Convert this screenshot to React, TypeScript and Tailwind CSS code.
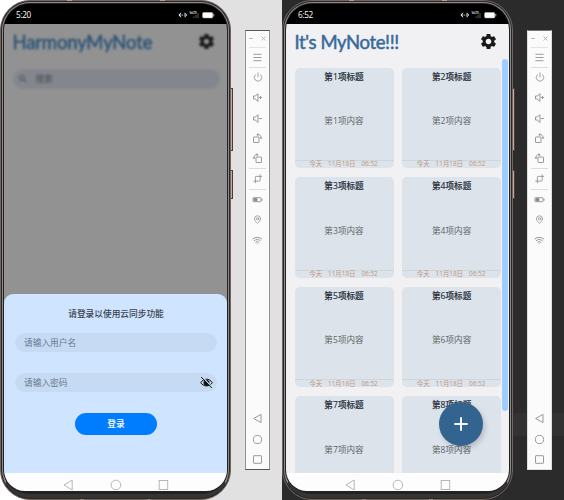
import React from "react";
import { MdSettings, MdSearch } from "react-icons/md";
import { Menu, Power, Crop, MapPin, Wifi } from "lucide-react";

function Title({ children, color }: { children: React.ReactNode; color: string }) {
  return (
    <h1 className={`pt-px font-['Lato',sans-serif] text-[18.5px] font-normal leading-none [-webkit-text-stroke:0.5px_currentColor] ${color}`}>{children}</h1>
  );
}

function StatusBar({ time }: { time: string }) {
  return (
    <div className="flex h-[20px] shrink-0 items-center bg-black pt-[2px] pr-[12px] pl-[12px] text-white">
      <span className="pt-px font-['Open_Sans',sans-serif] text-[8.2px] font-medium leading-none tracking-[-0.3px]">{time}</span>
      <svg className="ml-auto" width="37" height="10" viewBox="0 0 37 10" fill="none">
        <path d="M3 2.8.9 5 3 7.2M6.5 2.8 8.6 5 6.5 7.2M2 5h1.4M6.1 5h1.4" stroke="#fff" strokeWidth="1" />
        <circle cx="4.7" cy="5" r=".6" fill="#fff" />
        <text x="11.4" y="4" fill="#ddd" fontSize="2.6" fontWeight="700" fontFamily="Roboto">VoLTE</text>
        <path d="M15.5 8h1V6.6h-1zM17.5 8h1V5h-1zM19.5 8h1V3h-1z" fill="#5a5a5a" />
        <rect x="24.6" y="2.5" width="10.2" height="5.4" rx="1.2" fill="#fff" stroke="#bbb" strokeWidth=".6" />
        <path d="M35.8 4v2.4" stroke="#ddd" strokeWidth=".8" />
      </svg>
    </div>
  );
}

function NavBar() {
  return (
    <div className="h-[18.5px] shrink-0 bg-[#fdfdfd]">
      <svg className="block" width="224" height="18" viewBox="0 0 224 18" fill="none" stroke="#b0b0b0" strokeWidth=".9">
        <path d="M68.2 7v10L60 12z" />
        <circle cx="111.9" cy="12" r="4.8" />
        <rect x="155.2" y="7.5" width="8.5" height="9" />
      </svg>
    </div>
  );
}

function Phone({ time, children }: { time: string; children: React.ReactNode }) {
  return (
    <div className="relative h-[500px] w-[231px] shrink-0">
      <div className="absolute top-[88px] right-[-2px] h-[63px] w-[3px] border border-[#493d38] bg-[#c3aba0]" />
      <div className="absolute top-[170px] right-[-2px] h-[29px] w-[3px] border border-[#493d38] bg-[#c3aba0]" />
      <div className="relative h-[500px] rounded-[30px] border border-[#75655e] bg-[#282828] p-px">
        <div className="h-full rounded-[28px] border border-b-[4px] border-[#8b8b8b] border-b-[#353535] bg-[#222] px-px pt-px pb-[3px]">
          <div className="flex h-full flex-col overflow-hidden rounded-t-[26px] rounded-b-[21px] bg-black">
            <StatusBar time={time} />
            {children}
            <NavBar />
          </div>
        </div>
      </div>
      <div className="absolute top-0 left-[67px] h-px w-[5px] bg-[#c4a092]" />
      <div className="absolute top-0 left-[160px] h-px w-[5px] bg-[#c4a092]" />
      <div className="absolute bottom-0 left-[80px] h-px w-[4px] bg-[#a58a7d]" />
      <div className="absolute bottom-0 left-[147px] h-px w-[4px] bg-[#a58a7d]" />
    </div>
  );
}

function Cell({ children, line = false }: { children: React.ReactNode; line?: boolean }) {
  return (
    <div className={`flex h-[20.3px] w-[17px] shrink-0 items-center justify-center border-b ${line ? "border-[#dcdcdc]" : "border-transparent"}`}>
      {children}
    </div>
  );
}

function Glyph({ children }: { children: React.ReactNode }) {
  return (
    <svg width="11" height="11" viewBox="0 0 11 11" fill="none" stroke="#888" strokeWidth=".85">
      {children}
    </svg>
  );
}

function Toolbar({ dark = false }: { dark?: boolean }) {
  return (
    <div className={`mt-[30px] flex h-[440px] w-[25px] shrink-0 flex-col items-center border bg-[#fbfbfb] text-[#888] ${dark ? "border-[#dedede] border-t-[#777]" : "border-[#929292] border-t-[#555] border-b-[#555]"}`}>
      <div className="flex h-[16.5px] w-[17px] shrink-0 items-center border-b border-[#e3e3e3]">
        <svg width="17" height="9" viewBox="0 0 17 9" fill="none" stroke="#aaa" strokeWidth=".8">
          <path d="M0 4.5h4M12.5 2.5l4 4M16.5 2.5l-4 4" />
        </svg>
      </div>
      <Cell line><Menu size={11} strokeWidth={1.8} /></Cell>
      <Cell><Power size={10} strokeWidth={1.8} /></Cell>
      <Cell><Glyph><path d="M1.5 4h1.7L6 1.8v7.6L3.2 7H1.5zM7 5.5h3M8.5 4v3" /></Glyph></Cell>
      <Cell><Glyph><path d="M1.5 4h1.7L6 1.8v7.6L3.2 7H1.5zM7 5.5h3" /></Glyph></Cell>
      <Cell><Glyph><rect x="1.5" y="4" width="5.5" height="5.5" rx=".5" /><path d="M5 1.7c2.5-.7 4.3.8 4 4M4.8 1.7l1.6-1M4.8 1.7l1.6 1.1M7.8 5h2.4" /></Glyph></Cell>
      <Cell line><Glyph><rect x="4" y="4" width="5.5" height="5.5" rx=".5" /><path d="M6 1.7C3.5 1 1.7 2.5 2 5.7M6.2 1.7 4.6.7M6.2 1.7 4.6 2.8M.8 5h2.4" /></Glyph></Cell>
      <Cell line><Crop size={9.5} strokeWidth={2} className="-scale-x-100" /></Cell>
      <Cell><Glyph><rect x="1" y="3.7" width="8" height="4" rx=".5" /><path d="M2 4.6h3v2.2H2z" fill="#888" /><path d="M10 4.7v2" /></Glyph></Cell>
      <Cell><MapPin size={9} strokeWidth={2} /></Cell>
      <Cell><Wifi size={10.5} strokeWidth={2} /></Cell>
      <div className="mt-auto -mb-px flex flex-col items-center">
        <Cell><Glyph><path d="M9 1.4v8.2L1.7 5.5z" /></Glyph></Cell>
        <Cell><Glyph><circle cx="5.5" cy="5.5" r="4.1" /></Glyph></Cell>
        <Cell><Glyph><rect x="1.5" y="1.7" width="8" height="7.6" rx=".5" /></Glyph></Cell>
      </div>
    </div>
  );
}

function Field({ label, children }: { label: string; children?: React.ReactNode }) {
  return (
    <div className="flex h-[18.5px] items-center justify-between rounded-full bg-[#c6dbf3] pr-[4.5px] pl-[9px] text-[8.7px] text-[#66798f]">
      <span>{label}</span>
      {children}
    </div>
  );
}

function LoginScreen() {
  return (
    <div className="flex min-h-0 flex-1 flex-col bg-[#929292] font-['Noto_Sans_CJK_SC',sans-serif]">
      <div className="h-[269.5px] shrink-0 px-[8.5px] blur-[0.8px]">
        <div className="flex h-[35px] items-center justify-between pr-[3px]">
          <Title color="text-[#2b5378] tracking-[-0.15px]">HarmonyMyNote</Title>
          <MdSettings size={19} color="#171717" />
        </div>
        <div className="mt-[10px] flex h-[19.5px] w-[207px] items-center rounded-full bg-[#83878d] pl-[5px] text-[8.7px] text-[#45494e]">
          <MdSearch size={10} />
          <span className="ml-[8px]">搜索</span>
        </div>
      </div>
      <div className="flex flex-1 flex-col rounded-t-[9px] bg-[#cfe4ff] pt-[13px] pr-[10px] pl-[11px]">
        <h2 className="mb-[13.5px] text-center text-[8.7px] font-medium leading-[13px] text-[#394350]">请登录以使用云同步功能</h2>
        <Field label="请输入用户名" />
        <div className="h-[21.5px]" />
        <Field label="请输入密码">
          <svg width="13" height="13" viewBox="0 0 13 13" fill="none" stroke="#111" strokeWidth="1">
            <path d="M.7 6.7C3.7 2 9.3 2 12.3 6.7 9.3 11 3.7 11 .7 6.7z" />
            <circle cx="6.5" cy="6.8" r="2.6" fill="#111" />
            <path d="M2.3.8 12.6 11.6" stroke="#c6dbf3" strokeWidth="1.2" />
            <path d="M1.1 1 11.8 12" />
          </svg>
        </Field>
        <button className="mt-[21.5px] flex h-[22px] w-[82px] items-center justify-center self-center rounded-full bg-[#007dff] text-[8.7px] font-medium text-white">登录</button>
      </div>
    </div>
  );
}

function Card({ n, cut = false }: { n: number; cut?: boolean }) {
  return (
    <div className={`flex flex-col bg-[#dce3eb] text-center text-[8.6px] ${cut ? "h-[78px] rounded-t-[5px]" : "h-[100.6px] rounded-[5px]"}`}>
      <div className="h-[19px] shrink-0 font-medium leading-[19.5px] text-[#29313e] [-webkit-text-stroke:0.15px_#29313e]">第{n}项标题</div>
      <div className="flex h-[70.4px] shrink-0 items-center justify-center text-[#626768]">第{n}项内容</div>
      {!cut && (
        <div className="mt-auto flex h-[8px] shrink-0 items-center justify-center gap-[6px] border-t border-[#cfd6d9] pr-px text-[6.4px] leading-none text-[#c0987f]">
          <span>今天</span>
          <span>11月18日</span>
          <span>06:52</span>
        </div>
      )}
    </div>
  );
}

function NotesScreen() {
  return (
    <div className="relative flex min-h-0 flex-1 flex-col overflow-hidden bg-[#f1f1f3] px-[8.5px]">
      <div className="flex h-[35px] shrink-0 items-center justify-between pr-[3px]">
        <Title color="text-[#386a9b] tracking-[-0.38px]">It's MyNote!!!</Title>
        <MdSettings size={19} color="#191919" />
      </div>
      <div className="mt-[8.5px] grid w-[206.6px] shrink-0 grid-cols-2 gap-x-[8.5px] gap-y-[9px]">
        {[1, 2, 3, 4, 5, 6, 7, 8].map((n) => <Card key={n} n={n} cut={n > 6} />)}
      </div>
      <div className="absolute top-[35px] right-[1px] h-[352px] w-[6px] rounded-full bg-[#9fcdff]" />
      <button className="absolute top-[378px] left-[152.5px] flex size-[44px] items-center justify-center rounded-full bg-[#33638f] shadow-[2px_3px_5px_#0000002b]">
        <svg width="14" height="14" viewBox="0 0 14 14" stroke="#f3f6fa" strokeWidth="2">
          <path d="M7 .3v13.4M.3 7h13.4" />
        </svg>
      </button>
    </div>
  );
}

export default function App() {
  return (
    <main className="flex h-[500px] w-[564px] overflow-hidden font-['Open_Sans','Noto_Sans_CJK_SC',sans-serif]">
      <section className="flex w-[282px] gap-[14px] bg-[linear-gradient(90deg,#fff_0_100px,#e1e1e1_100px)]">
        <Phone time="5:20"><LoginScreen /></Phone>
        <Toolbar />
      </section>
      <section className="flex w-[282px] gap-[14px] bg-[linear-gradient(#2b2b2b_0_413px,#323232_413px_436px,#2b2b2b_436px)]">
        <Phone time="6:52"><NotesScreen /></Phone>
        <Toolbar dark />
      </section>
    </main>
  );
}
